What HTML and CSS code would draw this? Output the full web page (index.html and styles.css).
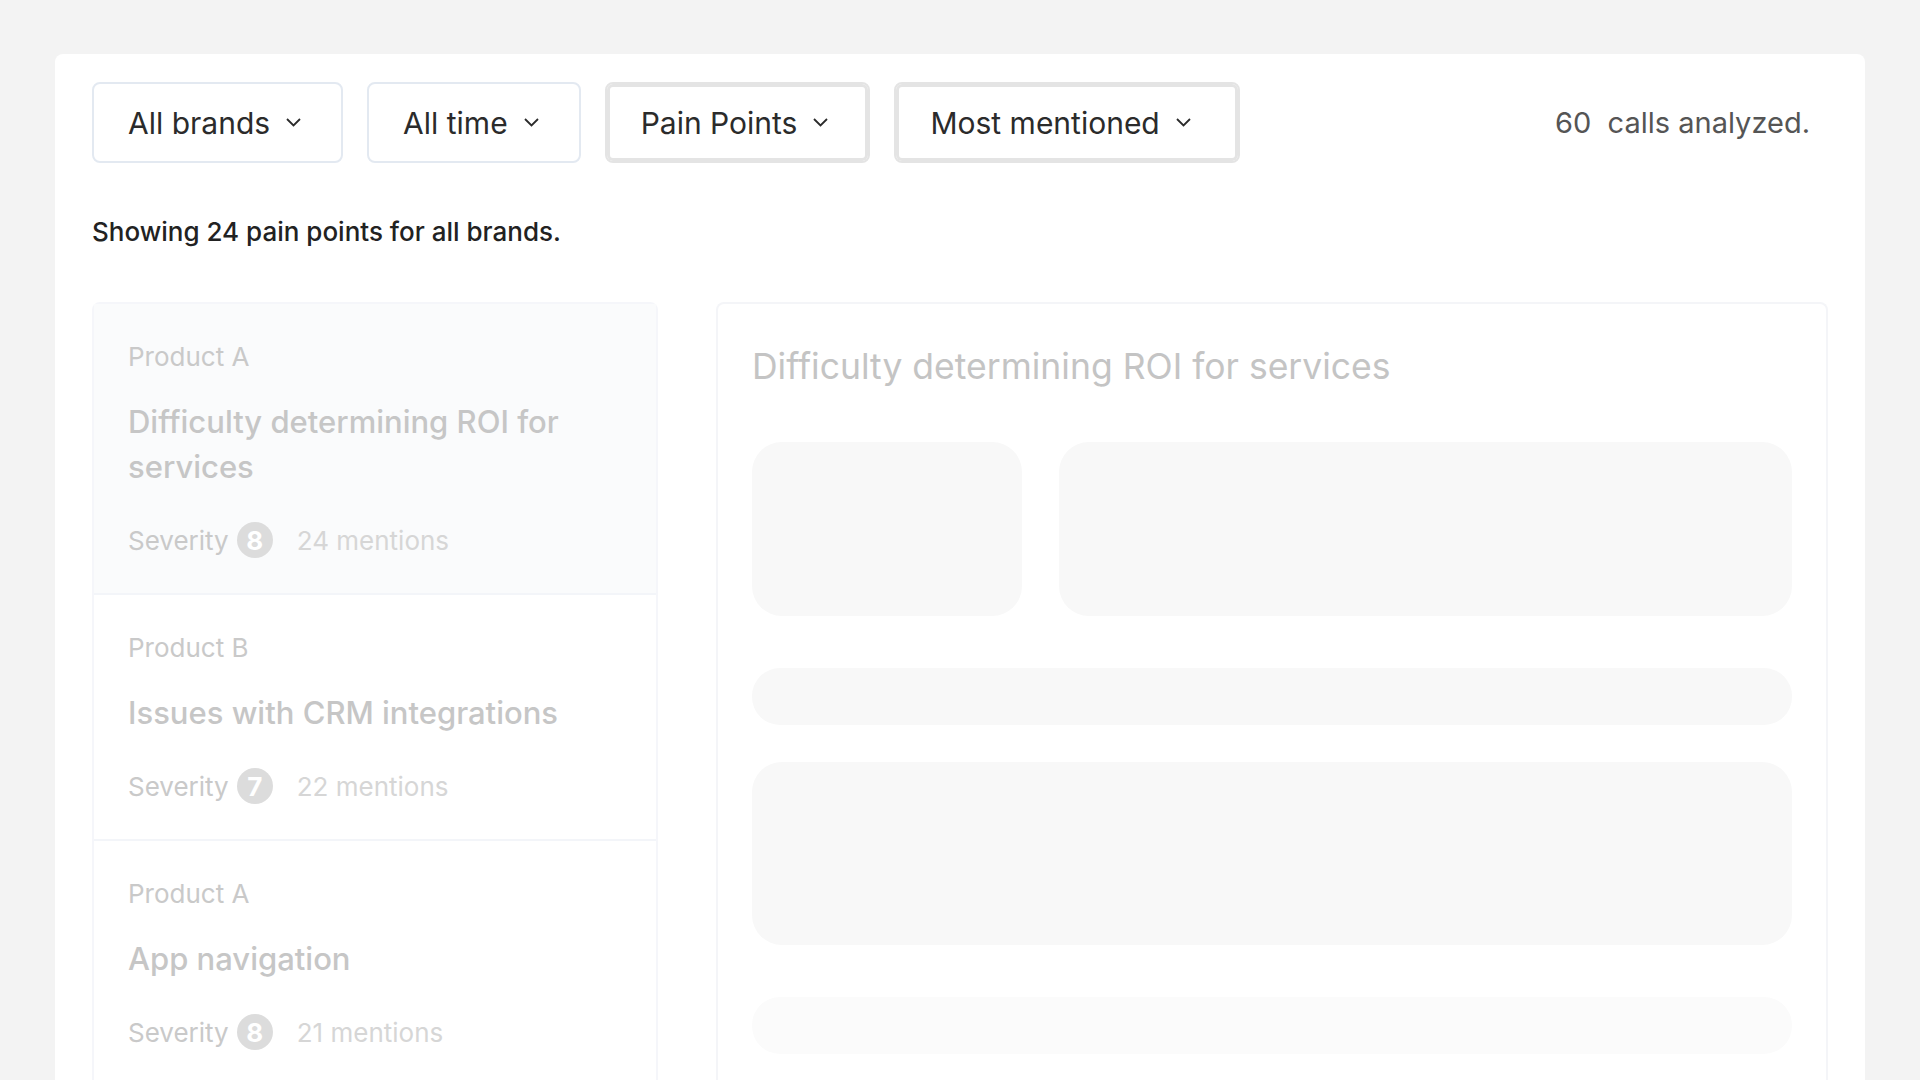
FILE: index.html
```html
<!DOCTYPE html>
<html lang="en">
<head>
    <meta charset="UTF-8">
    <title>Pain Points</title>
    <meta name="viewport" content="width=device-width, initial-scale=1.0">
    <link rel="stylesheet" href="styles.css">
</head>
<body>
<div class="app">
    <div class="toolbar">
        <button class="select">All brands <svg class="chevron" viewBox="0 0 15 9"><polyline points="1,1 7.5,7.5 14,1"/></svg></button>
        <button class="select">All time <svg class="chevron" viewBox="0 0 15 9"><polyline points="1,1 7.5,7.5 14,1"/></svg></button>
        <button class="select active">Pain Points <svg class="chevron" viewBox="0 0 15 9"><polyline points="1,1 7.5,7.5 14,1"/></svg></button>
        <button class="select active">Most mentioned <svg class="chevron" viewBox="0 0 15 9"><polyline points="1,1 7.5,7.5 14,1"/></svg></button>
        <div class="calls">60&nbsp; calls analyzed.</div>
    </div>

    <p class="summary">Showing 24 pain points for all brands.</p>

    <div class="content">
        <div class="list">
            <div class="item selected">
                <div class="product">Product A</div>
                <div class="title">Difficulty determining ROI for services</div>
                <div class="meta">
                    <span>Severity</span>
                    <span class="badge">8</span>
                    <span class="mentions">24 mentions</span>
                </div>
            </div>
            <div class="item">
                <div class="product">Product B</div>
                <div class="title">Issues with CRM integrations</div>
                <div class="meta">
                    <span>Severity</span>
                    <span class="badge">7</span>
                    <span class="mentions">22 mentions</span>
                </div>
            </div>
            <div class="item">
                <div class="product">Product A</div>
                <div class="title">App navigation</div>
                <div class="meta">
                    <span>Severity</span>
                    <span class="badge">8</span>
                    <span class="mentions">21 mentions</span>
                </div>
            </div>
        </div>

        <div class="detail">
            <h2>Difficulty determining ROI for services</h2>
            <div class="skeleton-row">
                <div class="skeleton small"></div>
                <div class="skeleton wide"></div>
            </div>
            <div class="skeleton bar"></div>
            <div class="skeleton block"></div>
            <div class="skeleton bar faded"></div>
        </div>
    </div>
</div>
</body>
</html>
```

FILE: styles.css
```css
html, body {
    margin: 0;
    height: 1080px;
    overflow: hidden;
}

body {
    background: #f3f3f3;
    font-family: Inter, "Noto Sans", sans-serif;
}

.app {
    background: white;
    margin: 54px 55px 0;
    padding: 28px 37px 0;
    border-radius: 8px 8px 0 0;
    min-height: 1100px;
    box-sizing: border-box;
}

.toolbar {
    display: flex;
    align-items: center;
    gap: 24px;
}

.select {
    display: flex;
    align-items: center;
    gap: 16px;
    height: 81px;
    padding: 0 40px 0 34px;
    background: white;
    border: 2px solid #e3e9f1;
    border-radius: 8px;
    font-family: inherit;
    font-size: 30px;
    color: #2b2b2b;
}

.select.active {
    border-color: #e4e4e4;
    box-shadow: inset 0 0 0 3px #e4e4e4;
}

.select.active:last-of-type {
    padding-right: 47px;
}

.chevron {
    width: 15px;
    height: 9px;
    fill: none;
    stroke: #2b2b2b;
    stroke-width: 1.8;
}

.calls {
    margin-left: auto;
    margin-right: 18px;
    font-size: 29px;
    color: #555;
}

.summary {
    margin: 51px 0 52px;
    font-size: 26px;
    line-height: 36px;
    font-weight: 500;
    color: #222;
}

.content {
    display: grid;
    grid-template-columns: 566px 1fr;
    gap: 58px;
    align-items: start;
}

.list {
    border: 2px solid #f5f6fa;
    border-bottom: none;
    border-radius: 8px 8px 0 0;
}

.item {
    padding: 35px 34px 35px;
    border-bottom: 2px solid #f3f5f9;
}

.item.selected {
    background: #fafbfc;
}

.product {
    font-size: 26px;
    line-height: 36px;
    color: #c9c9c9;
}

.title {
    margin-top: 24px;
    font-size: 31px;
    line-height: 45px;
    font-weight: 500;
    color: #c6c6c6;
}

.meta {
    display: flex;
    align-items: center;
    gap: 8px;
    margin-top: 33px;
    height: 36px;
    font-size: 26px;
    color: #c9c9c9;
}

.badge {
    display: flex;
    align-items: center;
    justify-content: center;
    width: 36px;
    height: 36px;
    border-radius: 50%;
    background: #dcdcdc;
    color: white;
    font-weight: 700;
}

.mentions {
    margin-left: 16px;
    color: #d6d6d6;
}

.detail {
    border: 2px solid #f4f5f8;
    border-bottom: none;
    border-radius: 8px 8px 0 0;
    padding: 41px 34px 0;
    min-height: 800px;
}

.detail h2 {
    margin: 0 0 53px;
    font-size: 35.5px;
    line-height: 44px;
    font-weight: 400;
    color: #c4c4c4;
}

.skeleton-row {
    display: flex;
    gap: 37px;
}

.skeleton {
    background: #f8f8f8;
    border-radius: 30px;
}

.skeleton.small {
    width: 270px;
    height: 174px;
}

.skeleton.wide {
    flex: 1;
    height: 174px;
}

.skeleton.bar {
    height: 57px;
    margin-top: 52px;
    border-radius: 28px;
}

.skeleton.block {
    height: 183px;
    margin-top: 37px;
}

.skeleton.faded {
    background: #fbfbfb;
}
```
